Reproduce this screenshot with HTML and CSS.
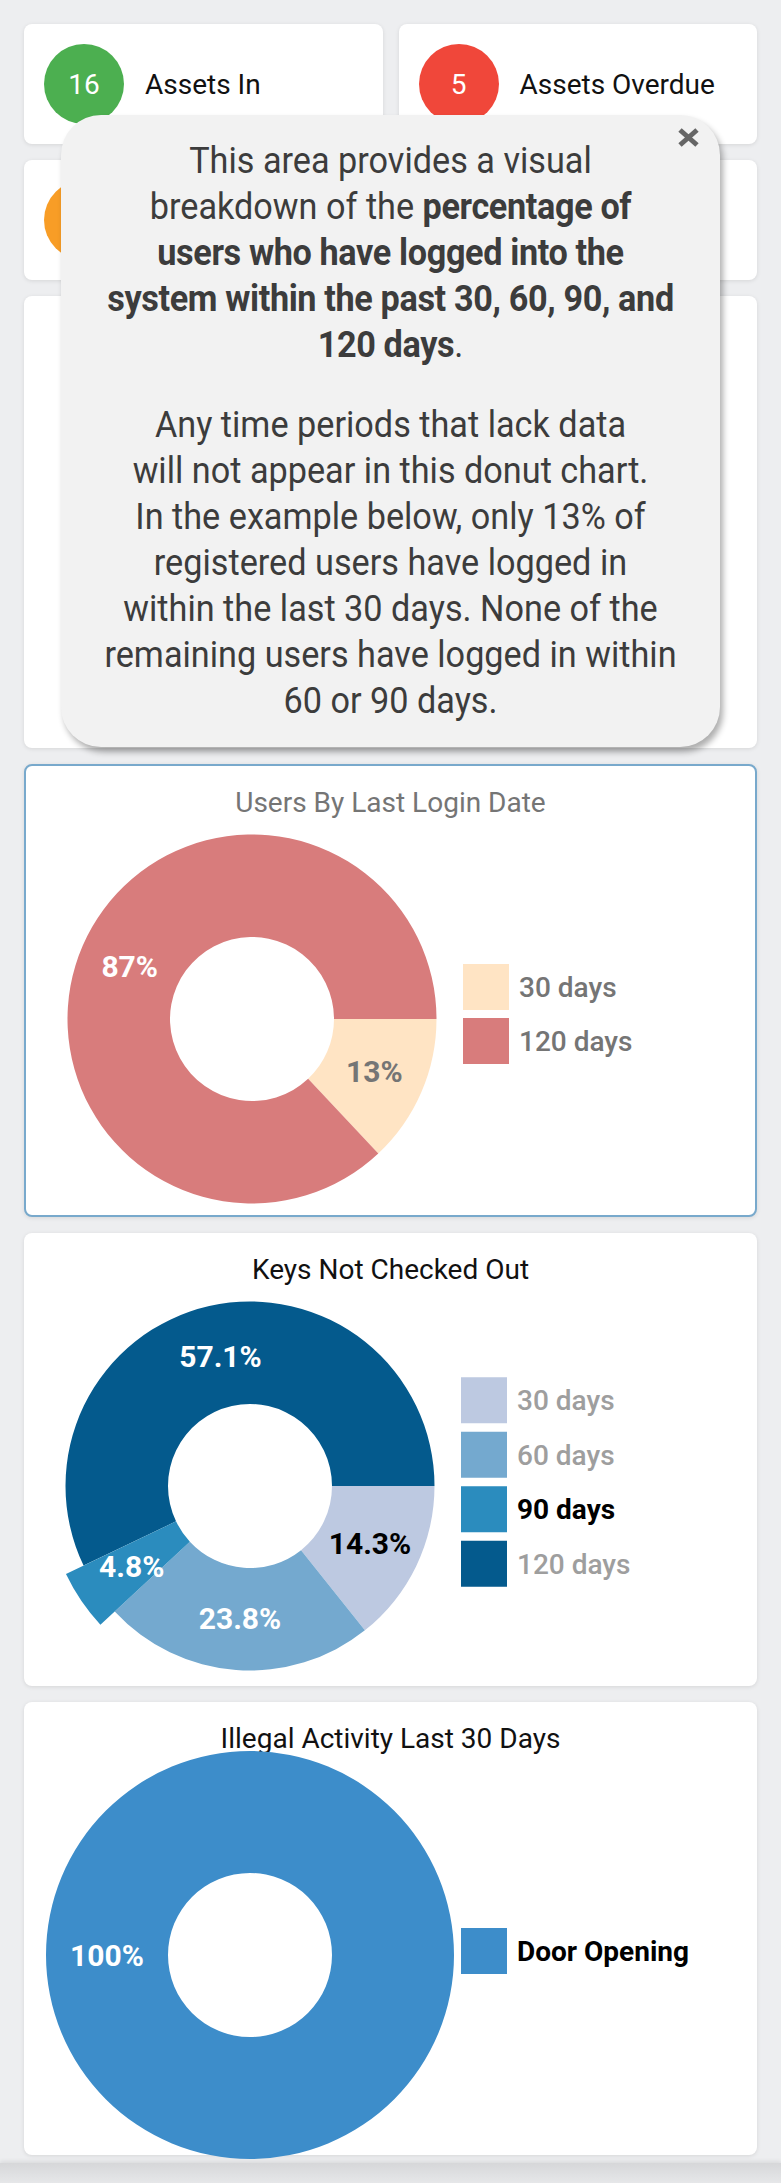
FILE: index.html
```html
<!DOCTYPE html>
<html lang="en">
<head>
<meta charset="utf-8">
<title>Dashboard</title>
<link rel="stylesheet" href="styles.css">
</head>
<body>
<div class="page">
  <div class="stats">
    <div class="card stat"><span class="badge green">16</span><span class="stat-label">Assets In</span></div>
    <div class="card stat"><span class="badge red">5</span><span class="stat-label">Assets Overdue</span></div>
    <div class="card stat"><span class="badge orange"></span></div>
    <div class="card stat"></div>
  </div>

  <div class="card chart-card blank"></div>

  <div class="card chart-card selected">
    <div class="chart-title muted">Users By Last Login Date</div>
    <svg class="chart" width="733" height="400" viewBox="0 -7 733 400">
      <path fill="#ffe4c4" d="M410.5 193 A184.5 184.5 0 0 1 352.29 327.5 L282.13 252.78 A82 82 0 0 0 308 193 Z"/>
      <path fill="#d87c7c" d="M352.29 327.5 A184.5 184.5 0 1 1 410.5 193 L308 193 A82 82 0 1 0 282.13 252.78 Z"/>
      <text class="slice-label" x="103.7" y="150.6" fill="#ffffff">87%</text>
      <text class="slice-label" x="348.3" y="256.4" fill="#757575">13%</text>
      <rect x="437" y="138" width="46" height="46" fill="#ffe4c4"/>
      <text class="legend-text" x="493" y="171" fill="#757575">30 days</text>
      <rect x="437" y="192" width="46" height="46" fill="#d87c7c"/>
      <text class="legend-text" x="493" y="225" fill="#757575">120 days</text>
    </svg>
  </div>

  <div class="card chart-card">
    <div class="chart-title">Keys Not Checked Out</div>
    <svg class="chart" width="733" height="400" viewBox="0 -7 733 400">
      <path fill="#bdc9e1" d="M410.5 193 A184.5 184.5 0 0 1 340.89 337.37 L277.06 257.17 A82 82 0 0 0 308 193 Z"/>
      <path fill="#74a9cf" d="M340.89 337.37 A184.5 184.5 0 0 1 90.71 318.44 L165.87 248.75 A82 82 0 0 0 277.06 257.17 Z"/>
      <path fill="#045a8d" d="M59.56 272.59 A184.5 184.5 0 1 1 410.5 193 L308 193 A82 82 0 1 0 152.03 228.37 Z"/>
      <path fill="#2b8cbe" d="M76.41 331.7 A204 204 0 0 1 41.97 281.01 L152.03 228.37 A82 82 0 0 0 165.87 248.75 Z"/>
      <text class="slice-label" x="346" y="261.4" fill="#000000">14.3%</text>
      <text class="slice-label" x="216" y="336.4" fill="#ffffff">23.8%</text>
      <text class="slice-label" x="107.7" y="283.9" fill="#ffffff">4.8%</text>
      <text class="slice-label" x="196.5" y="73.6" fill="#ffffff">57.1%</text>
      <rect x="437" y="84.25" width="46" height="46" fill="#bdc9e1"/>
      <text class="legend-text" x="493" y="117.25" fill="#9e9e9e">30 days</text>
      <rect x="437" y="138.75" width="46" height="46" fill="#74a9cf"/>
      <text class="legend-text" x="493" y="171.75" fill="#9e9e9e">60 days</text>
      <rect x="437" y="193.25" width="46" height="46" fill="#2b8cbe"/>
      <text class="legend-text active" x="493" y="226.25" fill="#000000">90 days</text>
      <rect x="437" y="247.75" width="46" height="46" fill="#045a8d"/>
      <text class="legend-text" x="493" y="280.75" fill="#9e9e9e">120 days</text>
    </svg>
  </div>

  <div class="card chart-card">
    <div class="chart-title">Illegal Activity Last 30 Days</div>
    <svg class="chart" width="733" height="400" viewBox="0 -7 733 400">
      <path fill="#3d8dca" fill-rule="evenodd" d="M22 193 A204 204 0 1 1 430 193 A204 204 0 1 1 22 193 Z M144 193 A82 82 0 1 0 308 193 A82 82 0 1 0 144 193 Z"/>
      <text class="slice-label" x="83" y="203.5" fill="#ffffff">100%</text>
      <rect x="437" y="166" width="46" height="46" fill="#3d8dca"/>
      <text class="legend-text active" x="493" y="199" fill="#000000">Door Opening</text>
    </svg>
  </div>

  <div class="tooltip">
    <svg class="tooltip-close" width="21" height="19" viewBox="0 0 21 19">
      <path d="M2 2 L19 17 M19 2 L2 17" stroke="#666666" stroke-width="5"/>
    </svg>
    <p>This area provides a visual<br>breakdown of the <b>percentage of<br>users who have logged into the<br>system within the past 30, 60, 90, and<br>120 days</b>.</p>
    <p>Any time periods that lack data<br>will not appear in this donut chart.<br>In the example below, only 13% of<br>registered users have logged in<br>within the last 30 days. None of the<br>remaining users have logged in within<br>60 or 90 days.</p>
  </div>
</div>
<div class="footer"></div>
</body>
</html>
```

FILE: styles.css
```css
html, body {
  margin: 0;
  padding: 0;
}

body {
  background: #edeef0;
  font-family: Roboto, "Noto Sans", sans-serif;
  color: #111111;
}

.page {
  position: relative;
  padding: 24px 24px 8px;
  display: flex;
  flex-direction: column;
  gap: 16px;
}

.card {
  background: #ffffff;
  border-radius: 8px;
  box-shadow: 0 1px 4px rgba(0, 0, 0, 0.10);
  box-sizing: border-box;
}

.stats {
  display: grid;
  grid-template-columns: 1fr 1fr;
  gap: 16px;
}

.stat {
  height: 120px;
  display: flex;
  align-items: center;
  padding-left: 20px;
  gap: 21px;
}

.badge {
  width: 80px;
  height: 80px;
  flex: none;
  border-radius: 50%;
  display: flex;
  align-items: center;
  justify-content: center;
  color: #ffffff;
  font-size: 28px;
}

.green { background: #4caf50; }
.red { background: #f0473a; }
.orange { background: #f89d26; }

.stat-label {
  font-size: 28px;
  color: #111111;
}

.chart-card {
  height: 453px;
}

.blank {
  height: 452px;
}

.selected {
  border: 2px solid #78a9cc;
}

.chart-title {
  padding-top: 21px;
  font-size: 28px;
  line-height: 32px;
  text-align: center;
  color: #111111;
}

.chart-title.muted {
  color: #757575;
}

.chart {
  display: block;
  overflow: visible;
}

.slice-label {
  font-family: Roboto, "Noto Sans", sans-serif;
  font-size: 30px;
  font-weight: 700;
  text-anchor: middle;
}

.legend-text {
  font-family: Roboto, "Noto Sans", sans-serif;
  font-size: 28px;
  font-weight: 500;
}

.legend-text.active {
  font-weight: 700;
}

.tooltip {
  position: absolute;
  left: 61px;
  top: 115px;
  width: 659px;
  box-sizing: border-box;
  padding: 23px 20px 23px;
  background: #f2f2f2;
  border-radius: 40px;
  box-shadow: 3px 5px 6px rgba(0, 0, 0, 0.32);
  color: #3c3c3c;
  font-size: 37px;
  line-height: 46px;
  text-align: center;
}

.tooltip p {
  margin: 0;
  white-space: nowrap;
  transform: scaleX(0.925);
}

.tooltip p + p {
  margin-top: 34px;
}

.tooltip b {
  font-weight: 700;
  letter-spacing: -0.4px;
}

.tooltip-close {
  position: absolute;
  right: 21px;
  top: 13px;
}

.footer {
  height: 20px;
  background: linear-gradient(to bottom, #d6d7d9, #e6e7e9);
  box-shadow: 0 -2px 4px rgba(0, 0, 0, 0.08);
}
```
